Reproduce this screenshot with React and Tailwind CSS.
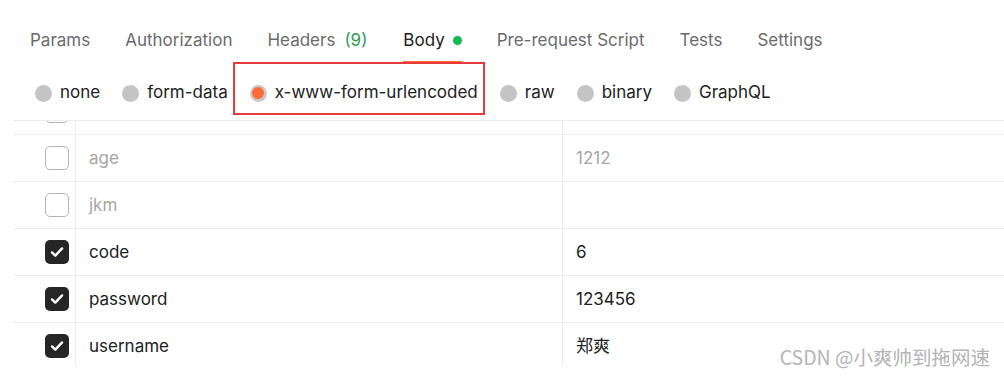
import React from 'react'

const font = { fontFamily: 'Inter, "Noto Sans CJK SC", sans-serif' }

const tabs = [
  { name: 'Params' },
  { name: 'Authorization' },
  { name: 'Headers', count: '(9)' },
  { name: 'Body', active: true },
  { name: 'Pre-request Script' },
  { name: 'Tests' },
  { name: 'Settings' },
]

const bodyTypes = ['none', 'form-data', 'x-www-form-urlencoded', 'raw', 'binary', 'GraphQL']

const rows = [
  { key: '', value: '', on: false },
  { key: 'age', value: '1212', on: false },
  { key: 'jkm', value: '', on: false },
  { key: 'code', value: '6', on: true },
  { key: 'password', value: '123456', on: true },
  { key: 'username', value: '郑爽', on: true },
]

const CheckBox = ({ on }) =>
  on ? (
    <span className="w-6 h-6 rounded-[5px] bg-[#262626] flex items-center justify-center">
      <svg width="16" height="16" viewBox="0 0 16 16" fill="none">
        <path d="M3 8.4l3.3 3.2 6.8-7.2" stroke="#fff" strokeWidth="2.4" strokeLinecap="round" strokeLinejoin="round" />
      </svg>
    </span>
  ) : (
    <span className="w-6 h-6 rounded-[5px] border border-[#b5b5b5] bg-white" />
  )

export default function App() {
  return (
    <div className="relative w-[1004px] h-[378px] bg-white overflow-hidden" style={font}>
      {/* tabs */}
      <div className="flex gap-[35px] pl-[30px] pt-[28px] h-[64px]">
        {tabs.map((t) => (
          <div key={t.name} className="flex flex-col">
            <div className={`flex items-center text-[17px] leading-[24px] ${t.active ? 'text-[#212121]' : 'text-[#6b6b6b]'}`}>
              <span>{t.name}</span>
              {t.count && <span className="ml-[9px] mr-[1px] text-[#2e9a55]">{t.count}</span>}
              {t.active && <span className="ml-[8px] w-[9px] h-[9px] rounded-full bg-[#0cbb52]" />}
            </div>
            {t.active && <div className="mt-[9px] h-[2px] bg-[#ff6c37]" />}
          </div>
        ))}
      </div>

      {/* body type radios */}
      <div className="flex items-center gap-[22px] pl-[35px] pt-[2px] h-[56px]">
        {bodyTypes.map((b) => {
          const sel = b === 'x-www-form-urlencoded'
          return (
            <div key={b} className="flex items-center gap-[8px]">
              {sel ? (
                <span className="w-[17px] h-[17px] rounded-full bg-[#c9c9c9] flex items-center justify-center">
                  <span className="w-[12px] h-[12px] rounded-full bg-[#ff6c37]" />
                </span>
              ) : (
                <span className="w-[17px] h-[17px] rounded-full bg-[#c4c4c4]" />
              )}
              <span className="text-[17px] text-[#212121]">{b}</span>
            </div>
          )
        })}
      </div>

      {/* annotation box */}
      <div className="absolute left-[233px] top-[62px] w-[252px] h-[53px] border-[2.5px] border-[#e83a3a]" />

      {/* key/value table */}
      <div className="ml-[13px] border-t border-[#ececec] h-[245px] overflow-hidden">
        <div className="mt-[-33px]">
          {rows.map((r, i) => (
            <div key={i} className="flex h-[47px] border-b border-[#ececec]">
              <div className="w-[63px] shrink-0 flex items-center pl-[32px] border-r border-[#ececec]">
                <CheckBox on={r.on} />
              </div>
              <div className={`w-[487px] shrink-0 flex items-center pl-[13px] pt-[2px] border-r border-[#ececec] text-[17px] ${r.on ? 'text-[#212121]' : 'text-[#a6a6a6]'}`}>
                {r.key}
              </div>
              <div className={`flex-1 flex items-center pl-[13px] pt-[2px] text-[17px] ${r.on ? 'text-[#212121]' : 'text-[#a6a6a6]'}`}>
                {r.value}
              </div>
            </div>
          ))}
        </div>
      </div>

      {/* watermark */}
      <div className="absolute right-[14px] top-[344px] text-[19.5px] leading-[26px] text-[#b4b4b4]" style={{ fontFamily: '"Noto Sans CJK SC", "Liberation Sans", sans-serif' }}>
        CSDN @小爽帅到拖网速
      </div>
    </div>
  )
}
